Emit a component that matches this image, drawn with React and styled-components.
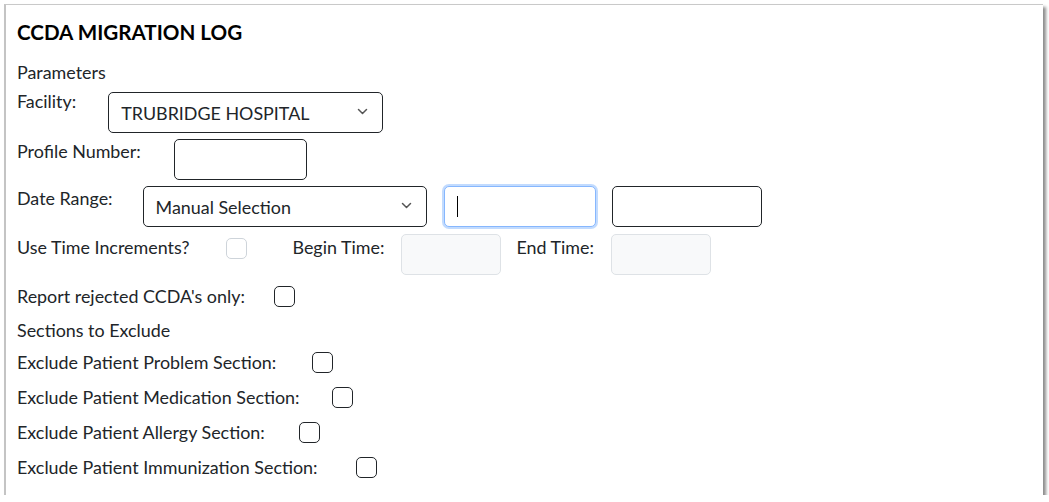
import React from 'react'
import styled, { createGlobalStyle } from 'styled-components'

const GlobalStyle = createGlobalStyle`
  html, body {
    margin: 0;
    padding: 0;
    background: #ffffff;
  }
  body {
    font-family: Lato, "Liberation Sans", sans-serif;
    color: #212529;
  }
`

const Frame = styled.div`
  box-sizing: border-box;
  margin: 4px 0 0 4px;
  width: 1039px;
  height: 491px;
  background: #fff;
  border-top: 1px solid #c9c9c9;
  border-left: 2px solid #c4c4c4;
  box-shadow: 3px 3px 3px rgba(0, 0, 0, 0.45);
  padding: 15px 0 0 11px;
  overflow: hidden;
`

const Title = styled.h1`
  margin: 0;
  font-size: 20.6px;
  font-weight: 700;
  line-height: 24px;
  color: #000;
`

const SectionHeading = styled.div`
  font-size: 17.9px;
  line-height: 20px;
  margin-top: ${p => p.$top}px;
`

const Row = styled.div`
  display: flex;
  align-items: flex-start;
  margin-top: ${p => p.$top}px;
`

const Label = styled.label`
  font-size: 17.9px;
  line-height: 20px;
  padding-top: ${p => p.$pad || 0}px;
  margin-right: ${p => p.$gap || 0}px;
  margin-left: ${p => p.$left || 0}px;
  white-space: nowrap;
`

const SelectBox = styled.div`
  box-sizing: border-box;
  position: relative;
  width: ${p => p.$w}px;
  height: 41px;
  margin-top: ${p => p.$top || 0}px;
  border: 1px solid #212529;
  border-radius: 5px;
  display: flex;
  align-items: center;
  padding-left: 12px;
  font-size: 17.9px;
  color: #212529;

  svg {
    position: absolute;
    right: 14px;
    top: 15px;
  }
`

const TextInput = styled.input`
  box-sizing: border-box;
  width: ${p => p.$w}px;
  height: 41px;
  margin: ${p => p.$top || 0}px 0 0 ${p => p.$left || 0}px;
  border: 1px solid ${p => (p.disabled ? '#dee2e6' : '#212529')};
  border-radius: 5px;
  background: ${p => (p.disabled ? '#f8f9fa' : '#fff')};
  padding: 0 12px;
  font-size: 16px;
  outline: none;
`

const FocusWrap = styled.div`
  position: relative;
  margin-left: ${p => p.$left}px;
`

const FocusInput = styled(TextInput)`
  border: 1px solid #86b7fe;
  box-shadow: 0 0 0 2px rgba(13, 110, 253, 0.25);
`

const Caret = styled.span`
  position: absolute;
  left: 13px;
  top: 10px;
  width: 1px;
  height: 21px;
  background: #000;
`

const Check = styled.input.attrs({ type: 'checkbox' })`
  appearance: none;
  box-sizing: border-box;
  width: 21px;
  height: 21px;
  margin: ${p => p.$top || 0}px ${p => p.$right || 0}px 0 0;
  border: 1px solid ${p => (p.disabled ? '#ced4da' : '#212529')};
  border-radius: 5px;
  background: #fff;
`

const Chevron = () => (
  <svg width="11" height="8" viewBox="0 0 11 8" fill="none">
    <path d="M1.5 1.5 L5.5 5.5 L9.5 1.5" stroke="#555" strokeWidth="1.5" strokeLinecap="round" strokeLinejoin="round" />
  </svg>
)

const excludes = [
  { label: 'Exclude Patient Problem Section:', top: 12, gap: 36 },
  { label: 'Exclude Patient Medication Section:', top: 14, gap: 32 },
  { label: 'Exclude Patient Allergy Section:', top: 14, gap: 34 },
  { label: 'Exclude Patient Immunization Section:', top: 14, gap: 38 }
]

export default function App() {
  return (
    <>
      <GlobalStyle />
      <Frame>
        <Title>CCDA MIGRATION LOG</Title>
        <SectionHeading $top={18}>Parameters</SectionHeading>

        <Row $top={2}>
          <Label $pad={7} $gap={32}>Facility:</Label>
          <SelectBox $w={275} $top={8}>
            TRUBRIDGE HOSPITAL
            <Chevron />
          </SelectBox>
        </Row>

        <Row $top={6}>
          <Label $pad={2} $gap={33}>Profile Number:</Label>
          <TextInput $w={133} />
        </Row>

        <Row $top={6}>
          <Label $pad={2} $gap={30}>Date Range:</Label>
          <SelectBox $w={284}>
            Manual Selection
            <Chevron />
          </SelectBox>
          <FocusWrap $left={17}>
            <FocusInput $w={152} />
            <Caret />
          </FocusWrap>
          <TextInput $w={150} $left={16} />
        </Row>

        <Row $top={7}>
          <Label $pad={3} $gap={37}>Use Time Increments?</Label>
          <Check disabled $top={4} $right={45} />
          <Label $pad={3} $gap={17}>Begin Time:</Label>
          <TextInput disabled $w={100} />
          <Label $pad={3} $gap={17} $left={15}>End Time:</Label>
          <TextInput disabled $w={100} />
        </Row>

        <Row $top={11}>
          <Label $gap={29}>Report rejected CCDA's only:</Label>
          <Check />
        </Row>

        <SectionHeading $top={13}>Sections to Exclude</SectionHeading>

        {excludes.map(e => (
          <Row key={e.label} $top={e.top}>
            <Label $gap={e.gap}>{e.label}</Label>
            <Check />
          </Row>
        ))}
      </Frame>
    </>
  )
}
